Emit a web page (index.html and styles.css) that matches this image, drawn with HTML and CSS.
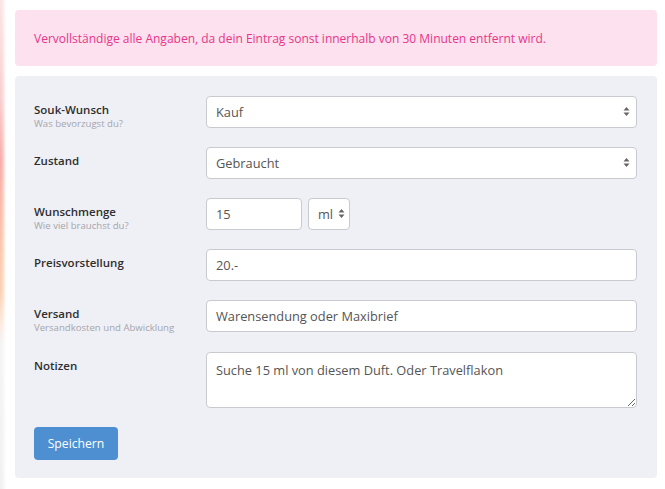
FILE: index.html
```html
<!DOCTYPE html>
<html lang="de">
<head>
    <meta charset="UTF-8">
    <meta name="viewport" content="width=device-width, initial-scale=1.0">
    <title>Souk-Eintrag bearbeiten</title>
    <link rel="stylesheet" href="styles.css">
</head>
<body>
    <div class="page">
        <div class="side-strip"></div>
        <div class="content">
            <div class="alert">Vervollständige alle Angaben, da dein Eintrag sonst innerhalb von 30 Minuten entfernt wird.</div>

            <form class="panel">
                <div class="form-group">
                    <label class="label">Souk-Wunsch<small>Was bevorzugst du?</small></label>
                    <div class="select-wrap">
                        <select class="control">
                            <option>Kauf</option>
                            <option>Tausch</option>
                        </select>
                        <svg class="arrows" width="7" height="11" viewBox="0 0 7 11"><path d="M3.5 1 L6.5 4.5 H0.5 Z M0.5 6.5 H6.5 L3.5 10 Z" fill="#666"/></svg>
                    </div>
                </div>

                <div class="form-group">
                    <label class="label">Zustand</label>
                    <div class="select-wrap">
                        <select class="control">
                            <option>Gebraucht</option>
                            <option>Neu</option>
                        </select>
                        <svg class="arrows" width="7" height="11" viewBox="0 0 7 11"><path d="M3.5 1 L6.5 4.5 H0.5 Z M0.5 6.5 H6.5 L3.5 10 Z" fill="#666"/></svg>
                    </div>
                </div>

                <div class="form-group">
                    <label class="label">Wunschmenge<small>Wie viel brauchst du?</small></label>
                    <div class="amount">
                        <input class="control amount-input" type="text" value="15">
                        <div class="select-wrap unit">
                            <select class="control">
                                <option>ml</option>
                                <option>g</option>
                            </select>
                            <svg class="arrows" width="7" height="11" viewBox="0 0 7 11"><path d="M3.5 1 L6.5 4.5 H0.5 Z M0.5 6.5 H6.5 L3.5 10 Z" fill="#666"/></svg>
                        </div>
                    </div>
                </div>

                <div class="form-group">
                    <label class="label">Preisvorstellung</label>
                    <input class="control" type="text" value="20.-">
                </div>

                <div class="form-group">
                    <label class="label">Versand<small>Versandkosten und Abwicklung</small></label>
                    <input class="control" type="text" value="Warensendung oder Maxibrief">
                </div>

                <div class="form-group notes-group">
                    <label class="label">Notizen</label>
                    <textarea class="control notes">Suche 15 ml von diesem Duft. Oder Travelflakon</textarea>
                </div>

                <div class="actions">
                    <button type="button" class="btn">Speichern</button>
                </div>
            </form>
        </div>
    </div>
</body>
</html>
```

FILE: styles.css
```css
body {
    margin: 0;
    font-family: 'Open Sans', 'Noto Sans', sans-serif;
    background: #fff;
    color: #333;
}
.page {
    display: flex;
    min-height: 100vh;
}
.side-strip {
    width: 6px;
    flex-shrink: 0;
    background:
        linear-gradient(to right, rgba(255,255,255,0) 0%, rgba(255,255,255,0.3) 50%, #fff 100%),
        linear-gradient(to bottom, #fce4e4 0%, #f9cccc 20%, #f6a9a6 33%, #f8b8a6 42%, #fac6a8 52%, #fbd0b2 60%, #fde8dc 66%, #f4f4f4 70%, #f0f0f0 100%);
}
.content {
    flex: 1;
    padding: 10px 8px 0 9px;
}
.alert {
    background: #fde1ee;
    color: #e8358a;
    font-size: 12px;
    border-radius: 4px;
    padding: 0 19px;
    height: 56px;
    display: flex;
    align-items: center;
    margin-bottom: 10px;
}
.panel {
    background: #eff0f5;
    border-radius: 4px;
    padding: 20px 20px 18px 19px;
}
.form-group {
    display: grid;
    grid-template-columns: 172px 1fr;
    margin-bottom: 19px;
}
.notes-group {
    margin-top: 20px;
}
.label {
    box-sizing: border-box;
    height: 32px;
    font-size: 11.5px;
    font-weight: 600;
    color: #2e2e2e;
    padding-top: 6px;
    line-height: 16px;
}
.label small {
    display: block;
    font-size: 9.6px;
    font-weight: 400;
    color: #a5a5ad;
    line-height: 12px;
}
.control {
    box-sizing: border-box;
    width: 100%;
    height: 32px;
    border: 1px solid #c9c9d0;
    border-radius: 4px;
    background: #fff;
    font-family: 'Open Sans', 'Noto Sans', sans-serif;
    font-size: 12.8px;
    color: #555;
    padding: 0 9px;
    margin: 0;
    outline: none;
}
select.control {
    appearance: none;
    -webkit-appearance: none;
}
.select-wrap {
    position: relative;
}
.arrows {
    position: absolute;
    right: 7px;
    top: 10px;
    pointer-events: none;
}
.amount {
    display: flex;
    gap: 6px;
}
.amount-input {
    width: 96px;
}
.unit {
    width: 42px;
}
.unit .arrows {
    right: 5px;
}
.notes {
    height: 56px;
    padding: 7px 9px;
    resize: vertical;
    line-height: 20px;
}
.btn {
    background: #4d8fd1;
    color: #fff;
    border: none;
    border-radius: 4px;
    font-family: 'Open Sans', 'Noto Sans', sans-serif;
    font-size: 12.2px;
    width: 84px;
    height: 33px;
    padding: 0;
    cursor: pointer;
}
```
